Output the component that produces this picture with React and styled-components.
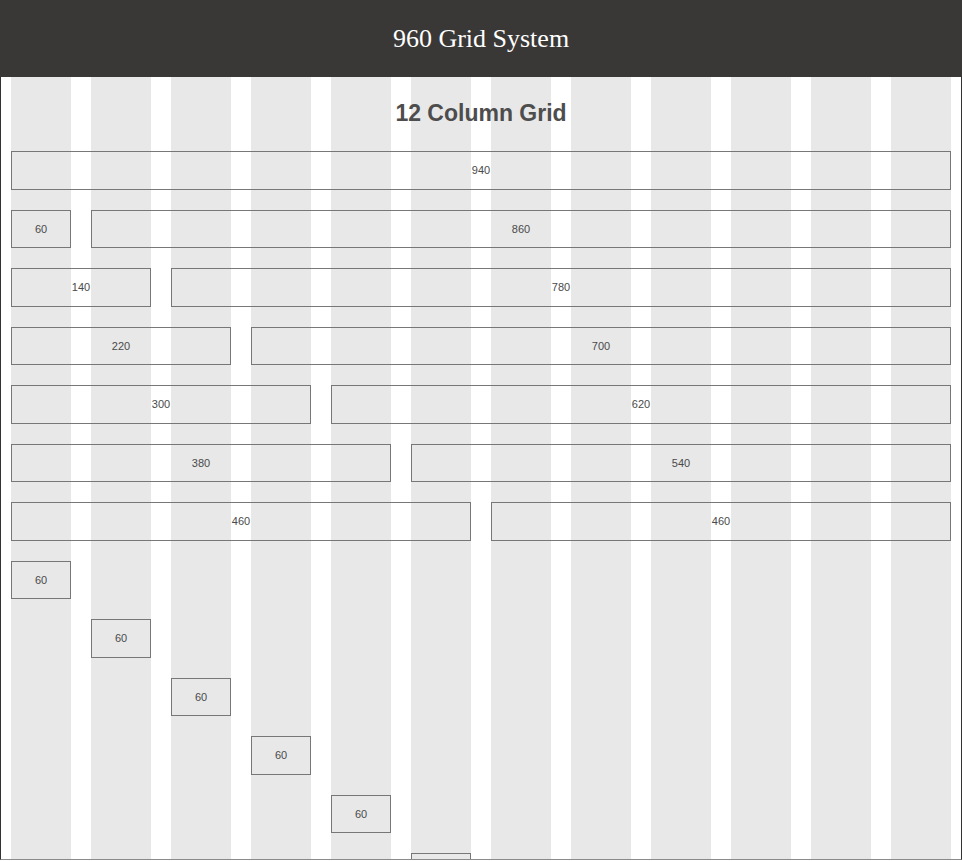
import React from "react";
import styled, { createGlobalStyle } from "styled-components";

const GlobalStyle = createGlobalStyle`
  html, body {
    margin: 0;
    padding: 0;
    background: #fff;
  }
  body {
    font-family: "Liberation Sans", Arial, sans-serif;
    overflow: hidden;
  }
`;

// each row: list of [startColumn, span]
const rows = [
  [[1, 12]],
  [[1, 1], [2, 11]],
  [[1, 2], [3, 10]],
  [[1, 3], [4, 9]],
  [[1, 4], [5, 8]],
  [[1, 5], [6, 7]],
  [[1, 6], [7, 6]],
  ...Array.from({ length: 6 }, (_, i) => [[i + 1, 1]]),
];

const App = () => {
  return (
    <>
      <GlobalStyle />
      <Page>
        <Header>
          <Title>960 Grid System</Title>
        </Header>
        <Main>
          <Heading>12 Column Grid</Heading>
          <Rows>
            {rows.map((row, i) => (
              <Row key={i}>
                {row.map(([start, span]) => (
                  <Cell key={start} $start={start} $span={span}>
                    {span * 80 - 20}
                  </Cell>
                ))}
              </Row>
            ))}
          </Rows>
        </Main>
      </Page>
    </>
  );
};

const Page = styled.div`
  width: 962px;
`;

const Header = styled.header`
  height: 77px;
  background: #3a3836;
  display: flex;
  align-items: center;
  justify-content: center;
`;

const Title = styled.h1`
  margin: 0;
  font-family: "Liberation Serif", Georgia, serif;
  font-weight: normal;
  font-size: 26px;
  line-height: 77px;
  color: #fff;
`;

const Main = styled.main`
  height: 783px;
  box-sizing: border-box;
  overflow: hidden;
  border-left: 1px solid #333;
  border-right: 1px solid #333;
  border-bottom: 1px solid #8a8a8a;
  padding: 19px 10px 0;
  background-image: repeating-linear-gradient(
    to right,
    #e8e8e8 0 60px,
    #fff 60px 80px
  );
  background-size: 940px 100%;
  background-position: 10px 0;
  background-repeat: no-repeat;
`;

const Heading = styled.h2`
  margin: 0 0 21px;
  text-align: center;
  font-size: 23px;
  line-height: 34px;
  font-weight: bold;
  color: #4d4d4d;
`;

const Rows = styled.div`
  display: flex;
  flex-direction: column;
  gap: 20px;
`;

const Row = styled.div`
  display: grid;
  grid-template-columns: repeat(12, 60px);
  column-gap: 20px;
  height: 38.5px;
  flex-shrink: 0;
`;

const Cell = styled.div`
  grid-column: ${(p) => `${p.$start} / span ${p.$span}`};
  box-sizing: border-box;
  border: 1px solid #777;
  display: flex;
  align-items: center;
  justify-content: center;
  font-size: 11px;
  color: #4a4a4a;
`;

export default App;
